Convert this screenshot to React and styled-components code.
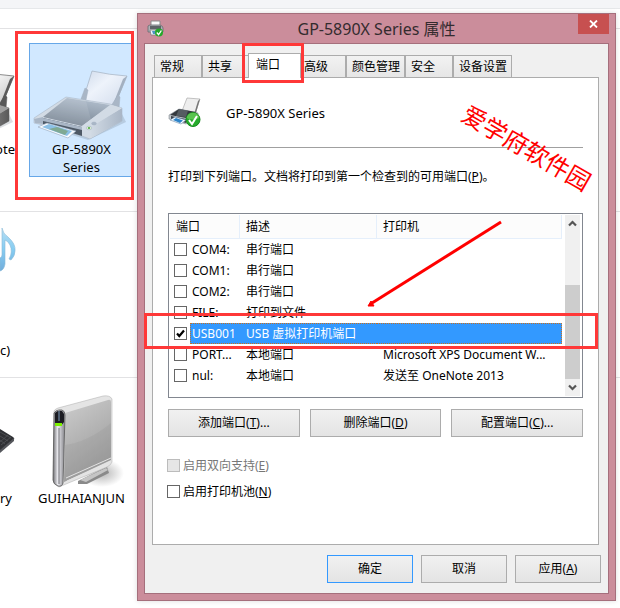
import React, { useState } from "react";
import styled, { createGlobalStyle, css } from "styled-components";

const GlobalStyle = createGlobalStyle`
  * { box-sizing: border-box; }
  body {
    margin: 0;
    background: #fff;
    color: #000;
    font: 12px/18px "Noto Sans", "Noto Sans CJK SC", sans-serif;
  }
  button, input { font: inherit; color: inherit; margin: 0; }
`;

/* ---------- Devices folder ---------- */

const Desktop = styled.div`
  position: relative;
  min-height: 100vh;
  overflow: hidden;
`;

const Toolbar = styled.div`
  height: 9px;
  background: #f4f5f7;
  border-bottom: 1px solid #e6e8ea;
  margin-bottom: 19px;
`;

const Section = styled.section`
  display: flex;
  align-items: flex-start;
  gap: 14px;
  min-height: ${(p) => p.$height}px;
  padding-top: 14px;
  border-top: 1px solid #e2e2e4;
`;

const Device = styled.div`
  position: relative;
  width: 105px;
  display: flex;
  flex-direction: column;
  align-items: center;
  border: 1px solid ${(p) => (p.$selected ? "#66a7e8" : "transparent")};
  background: ${(p) => (p.$selected ? "#d1e8ff" : "transparent")};
`;

const EdgeDevice = styled(Device)`
  width: 15px;
  border-width: 1px 0;
  align-items: ${(p) => (p.$end ? "flex-end" : "flex-start")};
`;

const IconSlot = styled.div`
  height: 96px;
  display: flex;
  align-items: ${(p) => p.$align || "flex-end"};
`;

const DeviceLabel = styled.div`
  font-size: 13px;
  line-height: 18px;
  min-height: ${(p) => (p.$lines || 1) * 18}px;
  display: flex;
  align-items: flex-end;
  text-align: center;
  white-space: nowrap;
`;

/* ---------- Annotations ---------- */

const Mark = styled.div`
  position: absolute;
  z-index: 3;
  border: 3px solid #ff3838;
  pointer-events: none;
`;

const DeviceMark = styled(Mark)`
  inset: -13px -1px -24px -15px;
`;

const TabMark = styled(Mark)`
  inset: -11px -4px -5px -7px;
`;

const RowMark = styled(Mark)`
  left: -25px;
  right: -16px;
  top: 99px;
  height: 36px;
`;

const Arrow = styled.svg`
  position: absolute;
  z-index: 3;
  left: 198px;
  top: 5px;
  pointer-events: none;
`;

const Watermark = styled.div`
  position: absolute;
  z-index: 3;
  left: 302px;
  top: 52px;
  font-family: "Noto Sans CJK SC", sans-serif;
  font-size: 24px;
  line-height: 34px;
  white-space: nowrap;
  color: #f00;
  transform: rotate(30deg);
  pointer-events: none;
`;

/* ---------- Dialog ---------- */

const Dialog = styled.div`
  position: absolute;
  left: 137px;
  right: 4px;
  top: 13px;
  padding: 0 6px 6px;
  background: #cb8d9b;
  border: 1px solid #a56f7c;
  box-shadow: 0 0 5px rgba(0, 0, 0, 0.14);
`;

const TitleBar = styled.header`
  height: 29px;
  display: grid;
  grid-template-columns: 40px 1fr 40px;
  align-items: center;
`;

const TitleIcon = styled.span`
  display: flex;
  padding-left: 3px;
`;

const Title = styled.h1`
  margin: 0;
  font-size: 16px;
  line-height: 22px;
  font-weight: 400;
  text-align: center;
  color: #332b2e;
`;

const CloseButton = styled.button`
  align-self: start;
  justify-self: end;
  width: 31px;
  height: 20px;
  padding: 0;
  border: 0;
  background: #c75050;
  display: flex;
  align-items: center;
  justify-content: center;
`;

const Client = styled.div`
  padding: 9px 7px 10px;
  background: #f0f0f0;
  border: 1px solid #a56f7c;
`;

const TabList = styled.div`
  display: flex;
  align-items: flex-end;
  height: 24px;
  padding-left: 2px;
`;

const Tab = styled.button`
  position: relative;
  height: 22px;
  min-width: 48px;
  padding: 0 4px 0 5px;
  text-align: left;
  white-space: nowrap;
  border: 1px solid #acacac;
  border-bottom: 0;
  background: linear-gradient(#f2f2f2, #e6e6e6);
  ${(p) =>
    p.$active &&
    css`
      z-index: 1;
      height: 25px;
      min-width: 53px;
      margin: 0 -3px -1px -2px;
      padding: 0 7px 2px;
      background: #fff;
    `}
`;

const Panel = styled.div`
  position: relative;
  margin-right: 2px;
  padding: 0 15px 44px;
  background: #fff;
  border: 1px solid #acacac;
`;

const PrinterHead = styled.div`
  display: flex;
  align-items: center;
  gap: 24px;
  height: 70px;
  border-bottom: 1px solid #a0a0a0;
  font-size: 13px;
`;

const Hint = styled.p`
  margin: 20px 0 27px;
`;

const ListFrame = styled.div`
  position: relative;
  display: flex;
  gap: 3px;
  min-height: 185px;
  padding: 1px;
  border: 1px solid #828790;
`;

const ListBody = styled.div`
  flex: 1;
  min-width: 0;
`;

const PortTable = styled.table`
  width: 100%;
  table-layout: fixed;
  border-collapse: separate;
  border-spacing: 0;

  col:nth-child(1) { width: 20px; }
  col:nth-child(2) { width: 50px; }
  col:nth-child(3) { width: 137px; }
`;

const HeadCell = styled.th`
  height: 24px;
  padding: 0 0 0 6px;
  text-align: left;
  font-weight: 400;
  background: #fcfcfc;
  border-right: 1px solid #e5effb;
  border-bottom: 1px solid #e5effb;
`;

const PortRow = styled.tr`
  height: 21px;
  ${(p) =>
    p.$selected &&
    css`
      color: #fff;
      td:not(:first-child) {
        background: #3399ff;
        border-top: 1px dotted #c87020;
        border-bottom: 1px dotted #c87020;
      }
      td:nth-child(2) { border-left: 1px dotted #c87020; }
      td:last-child { border-right: 1px dotted #c87020; }
    `}
`;

const Cell = styled.td`
  height: 21px;
  padding: 0 0 0 ${(p) => p.$pad}px;
  line-height: 18px;
  white-space: nowrap;
  overflow: hidden;
  text-overflow: ${(p) => (p.$clip ? "clip" : "ellipsis")};
`;

const CheckBox = styled.input.attrs({ type: "checkbox" })`
  appearance: none;
  display: block;
  flex: none;
  width: 13px;
  height: 13px;
  border: 1px solid #666;
  background: #fff;

  &:checked {
    background: #fff
      url("data:image/svg+xml,%3Csvg xmlns='http://www.w3.org/2000/svg' viewBox='0 0 11 11'%3E%3Cpath d='M2 5.5 4.3 8 9 2.5' fill='none' stroke='black' stroke-width='2.2'/%3E%3C/svg%3E");
  }
  &:disabled {
    border-color: #bcbcbc;
    background: #e6e6e6;
  }
`;

const ScrollBar = styled.div`
  width: 16px;
  padding-right: 1px;
  display: flex;
  flex-direction: column;
`;

const ScrollButton = styled.button`
  height: 17px;
  padding: 0;
  border: 0;
  background: #f0f0f0;
  display: flex;
  align-items: center;
  justify-content: center;
`;

const Track = styled.div`
  flex: 1;
  display: flex;
  flex-direction: column;
  justify-content: flex-end;
  background: #f0f0f0;
`;

const Thumb = styled.div`
  height: 64%;
  background: #cdcdcd;
`;

const PortActions = styled.div`
  display: grid;
  grid-template-columns: repeat(3, 1fr);
  gap: 10px;
  margin: 11px 0 20px;
`;

const Button = styled.button`
  height: 28px;
  padding: 0 8px;
  border: 1px solid ${(p) => (p.$primary ? "#3399ff" : "#acacac")};
  background: linear-gradient(#f1f1f1, #e4e4e4);
  white-space: nowrap;
`;

const Option = styled.label`
  display: flex;
  align-items: center;
  gap: 3px;
  height: 17px;
  margin-left: -1px;
  color: ${(p) => (p.$disabled ? "#777" : "#000")};

  & + & { margin-top: 9px; }
`;

const Footer = styled.footer`
  display: flex;
  justify-content: flex-end;
  gap: 8px;
  margin-top: 10px;

  ${Button} { width: 86px; }
`;

/* ---------- Drawings ---------- */

const palettes = {
  light: { paper: "#eef3fb", paper2: "#cfdaeb", edge: "#a3b0c0", rail: "#d2dbe5", side: "#a9b6c6", lid: "#74818f", lid2: "#b2bfce", slot: "#4e5966" },
  dark: { paper: "#f3f3f3", paper2: "#bdbdbd", edge: "#5c5c5c", rail: "#a0a0a0", side: "#595959", lid: "#2c2c2c", lid2: "#8a8a8a", slot: "#222" },
};

function PrinterDrawing({ id, tone = "light", viewBox = "33 68 97 71", width = 97, height = 71 }) {
  const c = palettes[tone];
  return (
    <svg width={width} height={height} viewBox={viewBox} aria-hidden="true">
      <defs>
        <linearGradient id={id + "p"} x1="0" x2="1" y1="0" y2="1">
          <stop offset="0" stopColor={c.paper2} />
          <stop offset=".4" stopColor={c.paper} />
          <stop offset="1" stopColor={c.paper2} />
        </linearGradient>
        <linearGradient id={id + "l"} x1=".7" x2=".3" y1="0" y2="1">
          <stop offset="0" stopColor={c.lid2} />
          <stop offset="1" stopColor={c.lid} />
        </linearGradient>
        <linearGradient id={id + "s"} x1="0" x2="1">
          <stop offset="0" stopColor={c.rail} />
          <stop offset="1" stopColor={c.side} />
        </linearGradient>
      </defs>
      <path d="M40 124 88 139 126 121 122 113Z" fill="#5b6876" opacity=".22" />
      <path d="M92 70Q110 74 127 75L114 106 83 99Z" fill={`url(#${id}p)`} stroke={c.edge} strokeWidth=".7" />
      <path d="M127 75 123 78 112 106 115 105Z" fill={c.edge} />
      <path d="M81 98 85 87 88 89 86 99ZM111 105 118 94 120 96 119 107Z" fill={c.side} stroke={c.edge} strokeWidth=".5" />
      <path d="M66 96 34 117 34 122 43 124 82 135 90 138 122 120 122 107 110 103Z" fill={c.rail} stroke={c.edge} strokeWidth=".5" />
      <path d="M67 97 110 104 82 125 43 116Z" fill={`url(#${id}l)`} />
      <path d="M67 97 86 100 91 119 82 125 43 116Z" fill="#fff" opacity=".1" />
      <path d="M90 126 122 107 122 120 91 137Z" fill={`url(#${id}s)`} />
      <path d="M82 125 111 104 122 107 91 126Z" fill={c.rail} />
      <path d="M43 117 82 126 82 135 43 123Z" fill={c.slot} />
      <path d="M43 117 82 126 82 129 43 120Z" fill={c.side} />
      <path d="M34 118 43 116 43 123 35 122Z" fill={c.side} />
      <path d="M38 126 47 122 76 130 68 137Z" fill="#f8fbff" stroke="#92a5bb" strokeWidth=".6" />
      <path d="M42 126 49 123 72 130 67 135Z" fill="#8cc0e6" />
      <path d="M49 128 57 126 68 130 65 134Z" fill="#7fa994" />
      <ellipse cx="89" cy="127" rx="2.8" ry="1.8" fill="#d7ebd0" stroke={c.edge} strokeWidth=".5" />
      <circle cx="89" cy="127" r="1" fill="#48a636" />
      <ellipse cx="94" cy="122.500" rx="2.4" ry="1.500" fill={c.side} stroke={c.edge} strokeWidth=".5" />
    </svg>
  );
}

function ReadyPrinter() {
  return (
    <svg width="34" height="31" viewBox="0 0 34 31" aria-hidden="true">
      <path d="M19 1 32 2 27 17 14 14Z" fill="#eee" stroke="#aaa" strokeWidth=".7" />
      <path d="M32 2 30 4 26 17 28 16Z" fill="#777" />
      <path d="M11 12 1 18 1 22 18 27 30 20 30 16Z" fill="#c6cbd0" stroke="#727a82" strokeWidth=".5" />
      <path d="M11 12 28 15 18 21 2 18Z" fill="#34393e" />
      <path d="M11 12 20 13.500 18 20 8 19Z" fill="#6d747b" opacity=".6" />
      <path d="M3 19 18 22 18 26 3 22Z" fill="#3b4148" />
      <path d="M2 23 7 20 18 23 13 27Z" fill="#f7fbff" stroke="#6a88a8" strokeWidth=".6" />
      <path d="M5 23 8 21 15 23.500 12 26Z" fill="#2e84c8" />
      <circle cx="25" cy="22.500" r="7" fill="#26ab2c" stroke="#168a1d" />
      <path d="M18.600 21A6.500 6.500 0 0 1 31.400 21Q25 24 18.600 21Z" fill="#7bd667" opacity=".6" />
      <path d="m21 23 3 4 5-8" fill="none" stroke="#fff" strokeWidth="2" />
    </svg>
  );
}

function SmallPrinter() {
  return (
    <svg width="17" height="17" viewBox="0 0 17 17" aria-hidden="true">
      <path d="M4 6V1H13V6" fill="#fafafa" stroke="#8b8b8b" />
      <path d="M1 6Q2 5 4 5H13Q16 6 16 8V12H1Z" fill="#aeb1b5" stroke="#65696e" strokeWidth=".8" />
      <path d="M3 6H14V9H3Z" fill="#5e6368" />
      <path d="M3 10H9V15H4Z" fill="#eef5fb" stroke="#777" strokeWidth=".7" />
      <path d="M5 11H8V14H6Z" fill="#4c92c4" />
      <circle cx="12" cy="12.500" r="4" fill="#24a82a" />
      <path d="m9.800 12.500 1.800 2.200 2.800-4.200" fill="none" stroke="#fff" strokeWidth="1.300" />
    </svg>
  );
}

function MusicNote() {
  return (
    <svg width="16" height="46" viewBox="0 0 16 46" aria-hidden="true">
      <defs>
        <linearGradient id="note" x1="0" y1="0" x2="0" y2="1">
          <stop offset="0" stopColor="#b7def3" />
          <stop offset=".5" stopColor="#86cdf2" />
          <stop offset="1" stopColor="#72addb" />
        </linearGradient>
      </defs>
      <path d="M2 1Q3 7 8 10Q16 17 15 24Q15 29 11 33L9 32Q13 25 10 18Q8 14 5 13V37Q4 43 0 44V31Q2 30 2 28Z" fill="url(#note)" stroke="#86b8d6" strokeWidth=".6" />
    </svg>
  );
}

function Keyboard() {
  return (
    <svg width="16" height="26" viewBox="0 0 16 26" aria-hidden="true">
      <path d="M0 1 13 9Q15 10 14 12L0 24Z" fill="#303135" />
      <path d="M0 22 14 10V13L0 25Z" fill="#55575c" />
      <path d="M0 4 11 10M0 8 8 13M0 12 5 16M8 7 0 14M11 9 1 17" fill="none" stroke="#515357" strokeWidth=".8" />
    </svg>
  );
}

function Drive() {
  return (
    <svg width="85" height="96" viewBox="39 393 85 96" aria-hidden="true">
      <defs>
        <linearGradient id="face" x1=".2" y1="0" x2=".6" y2="1">
          <stop offset="0" stopColor="#cacaca" />
          <stop offset="1" stopColor="#989898" />
        </linearGradient>
        <linearGradient id="spine" x1="0" x2="1">
          <stop offset="0" stopColor="#6c6c70" />
          <stop offset=".4" stopColor="#ededf2" />
          <stop offset="1" stopColor="#828287" />
        </linearGradient>
        <radialGradient id="shade">
          <stop offset="0" stopColor="#777" stopOpacity=".55" />
          <stop offset="1" stopColor="#777" stopOpacity="0" />
        </radialGradient>
      </defs>
      <ellipse cx="102" cy="473" rx="22" ry="14" fill="url(#shade)" />
      <path d="M78 481 107 467 109 473 87 484 78 484Z" fill="#8a8a8a" />
      <path d="M80 480 106 468 108 470 86 482Z" fill="#c5c5c5" />
      <path d="M54 411Q55 409 58 408L103 396Q110 395 112 399V462Q111 465 107 467L66 484 59 487Q54 485 54 481Z" fill="#e4e4e4" stroke="#aaa" strokeWidth=".5" />
      <path d="M65 413 108 400Q111 399 111 402V460L64 482Z" fill="url(#face)" />
      <path d="M65 445Q88 442 111 423V460L64 482Z" fill="#888" opacity=".18" />
      <path d="M66 478 111 458M67 481 111 462" stroke="#e3e3e3" strokeWidth="1" />
      <path d="M54 413Q56 410 59 410H62Q65 411 65 415L63 483Q62 487 58 486 53 484 53 480Z" fill="url(#spine)" stroke="#555" strokeWidth=".8" />
      <path d="M55 413Q57 410 62 411L64 414V422L61 426H55Z" fill="#1c1c22" />
      <path d="M59 411V421" stroke="#809fbf" strokeWidth="1" />
      <path d="M55 423H62V426H55Z" fill="#7cf000" />
      <path d="M59 428V484" stroke="#737378" strokeWidth="1" />
    </svg>
  );
}

function Chevron({ up }) {
  return (
    <svg width="9" height="7" viewBox="0 0 9 7" aria-hidden="true">
      <path d={up ? "M1 5.500 4.500 2 8 5.500" : "M1 1.500 4.500 5 8 1.500"} fill="none" stroke="#555" strokeWidth="2.200" />
    </svg>
  );
}

/* ---------- Data ---------- */

const tabs = ["常规", "共享", "端口", "高级", "颜色管理", "安全", "设备设置"];

const ports = [
  { name: "COM4:", text: "串行端口", printer: "" },
  { name: "COM1:", text: "串行端口", printer: "" },
  { name: "COM2:", text: "串行端口", printer: "" },
  { name: "FILE:", text: "打印到文件", printer: "" },
  { name: "USB001", text: "USB 虚拟打印机端口", printer: "", selected: true },
  { name: "PORT...", text: "本地端口", printer: "Microsoft XPS Document W..." },
  { name: "nul:", text: "本地端口", printer: "发送至 OneNote 2013" },
];

function Devices() {
  return (
    <>
      <Toolbar />
      <Section $height={183}>
        <EdgeDevice $end>
          <IconSlot>
            <PrinterDrawing id="edge" tone="dark" viewBox="112 68 16 71" width={16} height={71} />
          </IconSlot>
          <DeviceLabel>ote</DeviceLabel>
        </EdgeDevice>
        <Device $selected>
          <IconSlot>
            <PrinterDrawing id="main" />
          </IconSlot>
          <DeviceLabel $lines={2}>
            GP-5890X
            <br />
            Series
          </DeviceLabel>
          <DeviceMark />
        </Device>
      </Section>
      <Section $height={166}>
        <EdgeDevice>
          <IconSlot $align="flex-start">
            <MusicNote />
          </IconSlot>
          <DeviceLabel $lines={2}>c)</DeviceLabel>
        </EdgeDevice>
      </Section>
      <Section $height={166}>
        <EdgeDevice>
          <IconSlot $align="center">
            <Keyboard />
          </IconSlot>
          <DeviceLabel>ry</DeviceLabel>
        </EdgeDevice>
        <Device>
          <IconSlot>
            <Drive />
          </IconSlot>
          <DeviceLabel>GUIHAIANJUN</DeviceLabel>
        </Device>
      </Section>
    </>
  );
}

function PortList() {
  const [checked, setChecked] = useState("USB001");
  return (
    <ListFrame>
      <ListBody>
        <PortTable>
          <colgroup>
            <col />
            <col />
            <col />
            <col />
          </colgroup>
          <thead>
            <tr>
              <HeadCell colSpan={2}>端口</HeadCell>
              <HeadCell>描述</HeadCell>
              <HeadCell>打印机</HeadCell>
            </tr>
          </thead>
          <tbody>
            {ports.map((p) => (
              <PortRow key={p.name} $selected={p.selected}>
                <Cell $pad={4} $clip>
                  <CheckBox
                    aria-label={p.name}
                    checked={checked === p.name}
                    onChange={() => setChecked(checked === p.name ? "" : p.name)}
                  />
                </Cell>
                <Cell $pad={p.selected ? 1 : 2} $clip>{p.name}</Cell>
                <Cell $pad={6}>{p.text}</Cell>
                <Cell $pad={6} $clip>{p.printer}</Cell>
              </PortRow>
            ))}
          </tbody>
        </PortTable>
      </ListBody>
      <ScrollBar>
        <ScrollButton aria-label="向上滚动">
          <Chevron up />
        </ScrollButton>
        <Track>
          <Thumb />
        </Track>
        <ScrollButton aria-label="向下滚动">
          <Chevron />
        </ScrollButton>
      </ScrollBar>
      <RowMark />
      <Arrow width="138" height="90" viewBox="0 0 138 90" aria-hidden="true">
        <path d="M134 3 5 84" stroke="#f00" strokeWidth="3" />
        <path d="M1 87 4 82 7 87Z" fill="#f00" stroke="#f00" />
      </Arrow>
    </ListFrame>
  );
}

export default function App() {
  return (
    <Desktop>
      <GlobalStyle />
      <Devices />
      <Dialog role="dialog" aria-labelledby="dialog-title">
        <TitleBar>
          <TitleIcon>
            <SmallPrinter />
          </TitleIcon>
          <Title id="dialog-title">GP-5890X Series 属性</Title>
          <CloseButton aria-label="关闭">
            <svg width="9" height="8" viewBox="0 0 9 8" aria-hidden="true">
              <path d="M1 0.500 8 7.500M8 0.500 1 7.500" stroke="#fff" strokeWidth="1.800" />
            </svg>
          </CloseButton>
        </TitleBar>
        <Client>
          <TabList role="tablist">
            {tabs.map((t) => (
              <Tab key={t} role="tab" aria-selected={t === "端口"} $active={t === "端口"}>
                {t}
                {t === "端口" && <TabMark />}
              </Tab>
            ))}
          </TabList>
          <Panel role="tabpanel">
            <PrinterHead>
              <ReadyPrinter />
              <span>GP-5890X Series</span>
            </PrinterHead>
            <Watermark>爱学府软件园</Watermark>
            <Hint>
              打印到下列端口。文档将打印到第一个检查到的可用端口(<u>P</u>)。
            </Hint>
            <PortList />
            <PortActions>
              <Button>添加端口(<u>T</u>)...</Button>
              <Button>删除端口(<u>D</u>)</Button>
              <Button>配置端口(<u>C</u>)...</Button>
            </PortActions>
            <Option $disabled>
              <CheckBox disabled />
              <span>启用双向支持(<u>E</u>)</span>
            </Option>
            <Option>
              <CheckBox />
              <span>启用打印机池(<u>N</u>)</span>
            </Option>
          </Panel>
          <Footer>
            <Button $primary>确定</Button>
            <Button>取消</Button>
            <Button>应用(<u>A</u>)</Button>
          </Footer>
        </Client>
      </Dialog>
    </Desktop>
  );
}
